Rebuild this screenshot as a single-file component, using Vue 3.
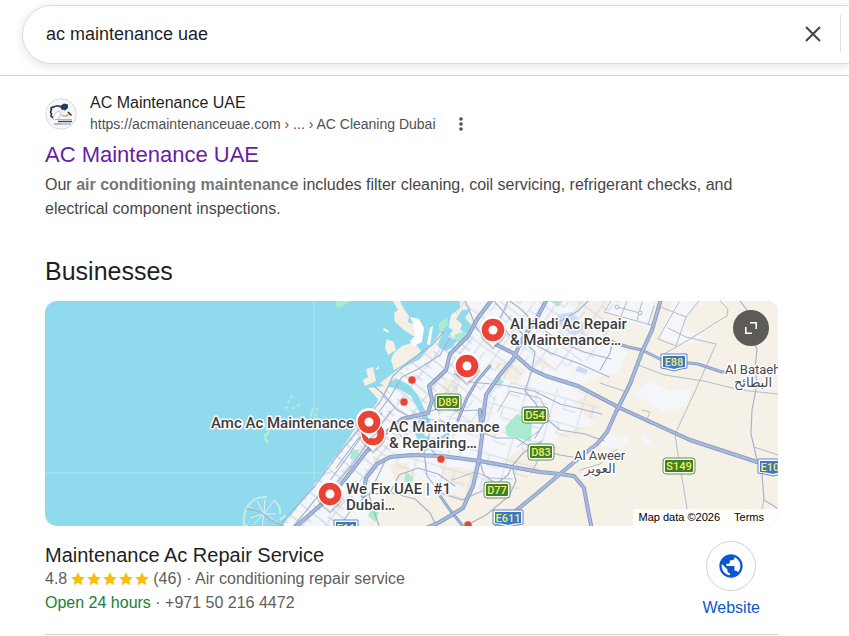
<script setup>
import { ref } from 'vue'

const query = ref('ac maintenance uae')

const pins = [
  { x: 493, y: 330 },
  { x: 467, y: 366 },
  { x: 373, y: 434 },
  { x: 369, y: 422 },
  { x: 330, y: 494 },
]

const dots = [
  { x: 412, y: 380 },
  { x: 404, y: 402 },
  { x: 441, y: 459 },
  { x: 468, y: 525 },
]

const shields = [
  { x: 448, y: 402, w: 24, name: 'D89' },
  { x: 535, y: 415, w: 24, name: 'D54' },
  { x: 541, y: 452, w: 24, name: 'D83' },
  { x: 497, y: 490, w: 24, name: 'D77' },
  { x: 679, y: 466, w: 30, name: 'S149' },
]

const highwayShields = [
  { x: 674, y: 362, w: 24, name: 'E88' },
  { x: 508, y: 518, w: 28, name: 'E611' },
  { x: 346, y: 528, w: 22, name: 'E11' },
  { x: 773, y: 467, w: 28, name: 'E102' },
]

const places = [
  { x: 510, y: 329, lines: ['Al Hadi Ac Repair', '& Maintenance…'] },
  { x: 211, y: 428, lines: ['Amc Ac Maintenance'] },
  { x: 389, y: 432, lines: ['AC Maintenance', '& Repairing…'] },
  { x: 346, y: 494, lines: ['We Fix UAE | #1', 'Dubai…'] },
]

const highways = [
  'M493 343L513 353L531 369L546 376L578 386L620 408L690 440L757 462L780 467',
  'M661 299L652 330L642 352L630 384L616 412L607 432L597 444L580 457L560 474L534 496L492 530',
  'M292 530L330 497L346 478L366 452L382 436L402 419L428 413L432 400L429 386L446 370L450 354L468 336L478 318L491 301',
  'M483 420L486 395L499 376L513 359L523 338L536 320L547 299',
  'M363 496L366 478L377 464L390 457L412 455L442 456L480 461L512 467L540 472L560 474L574 476L584 488L588 510L592 530',
  'M480 410L482 436L479 460L473 486L463 508L440 522L422 530',
]

const arterials = [
  'M458 420L467 398L477 381L490 366',
  'M606 340L628 347L642 350L662 360L698 364L722 372L736 372',
  'M436 490L450 510L466 530',
]

const roads = [
  'M444 332L432 345L408 362L393 376L382 399L363 424L337 456L315 486L286 518L278 528',
  'M450 338L440 355L420 368L402 377L390 397L370 424L348 456L326 486L302 516L290 530',
  'M374 386L384 395L397 410L410 417L434 420',
  'M465 301L470 312L477 329L489 341',
  'M494 301L511 320L528 341L551 353L580 364L609 377',
  'M510 301L522 310L536 325L557 323L578 311L588 301',
  'M536 323L558 341L584 352L611 359',
  'M524 342L535 352L532 370L525 391L536 404L544 423L535 438',
  'M454 374L470 382L502 385L534 391L560 404L602 414',
  'M440 420L455 428L477 431L497 438L516 438L529 446L560 455L578 458',
  'M427 418L430 432L424 452L427 476L440 493L462 500L482 491',
  'M386 459L378 476L369 495L379 526',
  'M394 427L405 441L428 446L437 456',
  'M427 413L443 406L457 411L480 410',
  'M480 462L484 475L496 484L508 475L512 466L523 453L542 441',
  'M512 466L516 481L509 496L486 515L471 523',
  'M548 420L560 430L585 434L604 441',
  'M508 301L500 319L508 334L523 342',
  'M613 340L610 353L600 370',
  'M382 413L373 424L357 440L336 468M391 411L377 430L352 465L335 485',
  'M340 525L352 509L368 494L392 493L415 499L430 513L438 529',
  'M390 493L399 475L418 468L438 474L455 486',
  'M740 301L747 310L746 321L754 340L757 350L755 368L757 384L752 410L751 434L757 460L762 474L764 500L777 508',
]

const tracks = [
  'M642 410L650 412L646 422L675 432',
  'M679 302L658 339L676 346L686 317L658 306M686 317L699 301',
  'M716 344L703 341L686 337L668 328M716 344L705 369L691 400L675 434L677 448L690 526',
  'M638 365L665 375L704 381L740 390L778 394',
  'M720 301L728 309L727 316L715 323L706 329L690 339L664 354',
  'M754 447L778 455M764 500L760 517',
  'M604 312L655 326M611 301L605 311M627 301L621 316M642 302L637 321M654 306L648 325M617 307L640 313',
  'M498 411L510 391L540 398L550 417M452 480L475 472L490 478L512 479',
  'M517 447L540 430M539 459L531 473M600 383L624 391M580 470L600 464L617 449',
]

const stars = [0, 1, 2, 3, 4]
</script>

<template>
  <div class="page">
    <header class="top">
      <form class="search" role="search" @submit.prevent>
        <input v-model="query" class="query" type="text" aria-label="Search" />
        <button class="clear" type="button" aria-label="Clear" @click="query = ''">
          <svg width="18" height="18" viewBox="0 0 18 18" aria-hidden="true">
            <path d="M2 2L16 16M16 2L2 16" stroke="#444746" stroke-width="2.1" />
          </svg>
        </button>
      </form>
    </header>

    <main class="content">
      <article class="result">
        <div class="source">
          <svg class="favicon" viewBox="0 0 32 32" aria-hidden="true">
            <circle cx="16" cy="16" r="15.3" fill="#f6f7f9" stroke="#d5d9df" />
            <path d="M9 8.500L6 10L6.500 12L5.500 14L6.500 16L6 18L8 20" stroke="#253044" stroke-width="1.600" fill="none" />
            <path d="M8 9.500Q12 6.500 16 9L18 12" stroke="#39465f" stroke-width="1.600" fill="none" />
            <path d="M15 8L19 5.500L23 6.500L23 10L20 12.500L17 11Z" fill="#263b63" />
            <path d="M8 22Q9 14 14 13Q17 13 15 18L12 22" fill="#fff" stroke="#aeb8c7" stroke-width=".8" />
            <path d="M16 16.500L20 17.500L24 15.500L23 18.500L18 18.500Z" fill="#dd9752" />
            <path d="M23 14L26.500 17.500" stroke="#252c3b" stroke-width="1.500" />
            <path d="M10 21.500H27" stroke="#9aa4b2" stroke-width=".8" />
            <path d="M13 23.500H27" stroke="#3c465b" stroke-width="1.400" />
            <path d="M9 26H26" stroke="#8a94a3" stroke-width="1" />
            <path d="M9 26H16" stroke="#c6a27c" stroke-width="1" />
          </svg>
          <div class="origin">
            <div class="site">AC Maintenance UAE</div>
            <div class="address">
              <cite>https://acmaintenanceuae.com › ... › AC Cleaning Dubai</cite>
              <button class="more" type="button" aria-label="About this result">
                <svg width="6" height="16" viewBox="0 0 6 16" fill="#4d5156" aria-hidden="true">
                  <circle cx="3" cy="3" r="1.800" /><circle cx="3" cy="8" r="1.800" /><circle cx="3" cy="13" r="1.800" />
                </svg>
              </button>
            </div>
          </div>
        </div>
        <h3 class="title"><a href="#result">AC Maintenance UAE</a></h3>
        <p class="snippet">
          Our <b>air conditioning maintenance</b> includes filter cleaning, coil servicing, refrigerant checks, and
          electrical component inspections.
        </p>
      </article>

      <section class="businesses">
        <h2>Businesses</h2>
        <div class="map">
          <svg class="canvas" viewBox="45 301 733 225" preserveAspectRatio="xMidYMid slice" role="img" aria-label="Map of businesses">
            <defs>
              <clipPath id="urban">
                <path d="M278 530L318 479L363 420L380 398L395 376L433 348L464 301H620L606 339L594 365L600 414L545 458L515 494L457 530Z" />
              </clipPath>
              <pattern id="coastGrid" width="18" height="15" patternUnits="userSpaceOnUse" patternTransform="rotate(38)">
                <path d="M0 2H18M4 2V15M0 10H9" fill="none" stroke="#b9c4db" stroke-width=".8" />
              </pattern>
              <pattern id="cityGrid" width="23" height="19" patternUnits="userSpaceOnUse" patternTransform="rotate(-54)">
                <path d="M0 2H23M4 0V19M14 2V10H23" fill="none" stroke="#c8d0e3" stroke-width=".8" />
              </pattern>
              <pattern id="eastGrid" width="29" height="25" patternUnits="userSpaceOnUse" patternTransform="rotate(16)">
                <path d="M0 2H29M5 2V25M16 2V13H29" fill="none" stroke="#cbd3e4" stroke-width=".8" />
              </pattern>
              <g id="pin">
                <path d="M0 18C-3 13-13 10-13 0A13 13 0 0 1 13 0C13 10 3 13 0 18Z" fill="#6d6d6d" opacity=".3" transform="translate(0 2)" />
                <path d="M0 17C-3 12-13 9-13-1A13 13 0 0 1 13-1C13 9 3 12 0 17Z" fill="#fff" />
                <circle r="11.300" fill="#ea4335" />
                <circle r="4.500" fill="#fff" />
              </g>
            </defs>

            <path d="M45 301H778V526H45Z" fill="#90daee" />
            <path d="M279 530L288 519L300 508L312 492L314 484L321 479L328 466L341 450L354 430L361 417L373 410L378 399L368 388L384 386L391 376L396 371L420 359L432 344L440 333L447 336L451 315L460 308L460 301H778V530Z" fill="#f5f1e6" />
            <g fill="#f4f6f9">
              <path d="M279 530L314 486L363 420L381 399L392 376L434 351L442 338L460 334L473 322L469 301H566L605 337L628 352L617 372L594 379L570 388L601 405L590 425L562 432L550 448L519 460L510 486L490 497L465 488L436 493L420 478L402 484L385 499L366 526Z" />
              <path d="M613 301H654L649 329L604 312Z" />
              <path d="M673 301L695 302L681 328L703 337L689 346L660 338Z" />
              <path d="M650 382L671 391L692 388L686 405L666 413L645 401L633 394Z" />
              <path d="M604 434L630 438L621 449L601 446Z" />
              <path d="M640 434L650 438L653 446L644 444Z" />
            </g>
            <g fill="#f5efe3">
              <path d="M491 360L527 368L516 385L502 376ZM530 362L553 371L545 357ZM544 315L573 321L600 335L570 337ZM573 403L594 390L601 405L590 420ZM388 464L405 462L418 475L398 485ZM439 464L474 470L468 491L444 478ZM475 421L495 422L500 436L484 435ZM500 462L524 448L544 457L536 466ZM446 378L458 384L452 396L440 392Z" />
            </g>
            <g clip-path="url(#urban)">
              <path d="M279 526L364 414L392 376L444 334L474 336L457 391L385 457L344 526Z" fill="url(#coastGrid)" />
              <path d="M450 301H620L606 354L540 375L508 373L485 423L430 440L446 390L470 340Z" fill="url(#cityGrid)" />
              <path d="M396 427L479 409L514 380L604 397L594 430L544 457L516 500L455 500L388 470Z" fill="url(#eastGrid)" />
            </g>
            <g fill="#a9ead1">
              <path d="M505 427L517 414L532 420L531 442L518 438L507 436ZM498 376L504 382L499 386L495 381ZM550 301H563L558 307ZM431 394L439 403L440 415L433 405ZM454 335L465 331L469 338L457 343ZM371 509L379 512L376 522L368 516ZM406 472L414 478L411 484L404 481ZM351 452L359 449L357 460L350 458ZM438 324L447 317L448 325L440 333ZM337 301H350L340 308L335 306Z" />
            </g>
            <g fill="#cddbf5">
              <path d="M557 315L572 312L581 322L597 323L607 332L585 329L574 336L559 325ZM578 366L588 370L586 374L575 371Z" />
            </g>
            <g fill="#90daee">
              <path d="M456 319L462 310L471 309L465 318L471 325L469 334L460 330L462 324ZM439 341L447 326L453 330L448 337L457 340L453 347L446 351L438 347Z" />
              <path d="M390 381L398 379L409 385L418 395L427 415L434 428L430 432L421 415L411 396L399 389L389 387Z" />
              <path d="M411 426L423 417L430 423L424 435L438 444L425 451L414 444L417 437ZM438 438L450 431L449 443L440 446Z" />
            </g>
            <g fill="#f5efe5">
              <path d="M393 301H400L404 309L409 316L408 322L419 327L420 337L413 336L404 330L395 322L394 313L398 310Z" />
              <path d="M387 339L394 342L396 350L388 355L385 347ZM394 353L402 346L414 342L421 351L414 358L401 366L394 370L391 360ZM366 369L373 367L376 381L365 386L363 380L368 377ZM380 383L400 368L398 376L384 386Z" />
              <path d="M410 317L419 319L424 328L422 342L414 346L410 341L415 336L413 323ZM430 328L433 326L430 345L427 344Z" fill="#fff" />
              <path d="M384 328L389 331L388 333L383 330ZM375 370L379 366L379 369Z" fill="#eff8ee" />
            </g>
            <g fill="none" stroke="#b1edd8" stroke-width="2" stroke-dasharray="3 3">
              <path d="M286 409L290 398L295 394M292 409L301 404M312 409L317 407L316 419L309 427L315 433M264 424L269 430L264 436L268 443M299 426L302 417" />
            </g>
            <path d="M265 428L269 431L265 438L268 443M312 410L311 417M317 420L315 428" stroke="#b3eed6" stroke-width="2" fill="none" />
            <g fill="none" stroke="#c5eee1" stroke-width="2">
              <path d="M246 530C239 512 250 496 267 497M273 500Q281 505 280 514M280 520Q285 514 289 518M249 529L246 525" />
              <path d="M264 514L249 507M264 514L257 501M264 514L265 499M264 514L273 502M264 514L250 518M264 514L253 525M264 514L279 523M264 514L262 527M264 514L276 514" stroke="#e0eff1" stroke-width="1" />
              <path d="M246 509Q260 509 271 520L284 526" stroke="#a8b5c8" stroke-width="1.500" />
            </g>
            <path d="M45 473H332M314 301V480" fill="none" stroke="#afe3f0" stroke-width="1" />

            <g fill="none" stroke-linejoin="round" stroke-linecap="round">
              <path v-for="road in tracks" :key="road" :d="road" stroke="#b4bccb" stroke-width="1" />
              <path v-for="road in roads" :key="road" :d="road" stroke="#a6b3d0" stroke-width="1.200" />
              <path v-for="road in arterials" :key="road" :d="road" stroke="#8299c4" stroke-width="3" />
              <path v-for="road in arterials" :key="`${road}-fill`" :d="road" stroke="#a9b9dc" stroke-width="1.500" />
              <path v-for="road in highways" :key="road" :d="road" stroke="#8097c2" stroke-width="4" />
              <path v-for="road in highways" :key="`${road}-fill`" :d="road" stroke="#a9b9dc" stroke-width="2.400" />
            </g>
            <g fill="#f4f6f9" stroke="#afb8c7">
              <circle cx="617" cy="307" r="2" /><circle cx="640" cy="313" r="2" />
            </g>

            <g class="route">
              <g v-for="shield in shields" :key="shield.name" :transform="`translate(${shield.x} ${shield.y})`">
                <rect :x="-shield.w / 2 - 1" y="-8" :width="shield.w + 2" height="16" rx="3" fill="#fff" stroke="#668d4d" />
                <rect :x="-shield.w / 2 + 1" y="-6" :width="shield.w - 2" height="12" rx="1" fill="#3d8127" />
                <text y="4" text-anchor="middle">{{ shield.name }}</text>
              </g>
              <g v-for="shield in highwayShields" :key="shield.name" :transform="`translate(${shield.x} ${shield.y})`">
                <path :d="`M${-shield.w / 2 - 1}-8H${shield.w / 2 + 1}V6Q${shield.w / 4} 7 0 9Q${-shield.w / 4} 7 ${-shield.w / 2 - 1} 6Z`" fill="#fff" stroke="#6385bd" stroke-linejoin="round" />
                <path :d="`M${-shield.w / 2 + 1}-6H${shield.w / 2 - 1}V5Q${shield.w / 4} 5 0 7Q${-shield.w / 4} 5 ${-shield.w / 2 + 1} 5Z`" fill="#3978c4" />
                <text y="4" text-anchor="middle">{{ shield.name }}</text>
              </g>
            </g>

            <g class="town">
              <text x="725" y="374">Al Bataeh</text>
              <text x="753" y="387" text-anchor="middle">البطائح</text>
              <text x="574" y="460">Al Aweer</text>
              <text x="600" y="473" text-anchor="middle">العوير</text>
            </g>
            <circle v-for="dot in dots" :key="dot.x" :cx="dot.x" :cy="dot.y" r="4" fill="#ea4335" stroke="#f7d6d1" stroke-width=".5" />
            <use v-for="pin in pins" :key="pin.y" href="#pin" :x="pin.x" :y="pin.y" />
            <g class="place">
              <text v-for="place in places" :key="place.x">
                <tspan v-for="(line, i) in place.lines" :key="line" :x="place.x" :y="place.y + i * 16">{{ line }}</tspan>
              </text>
            </g>
          </svg>
          <button class="expand" type="button" aria-label="Expand map">
            <svg width="14" height="14" viewBox="0 0 14 14" fill="none" stroke="#fff" stroke-width="1.600" aria-hidden="true">
              <path d="M6 1.800H12.200V8M1.800 6V12.200H8" />
            </svg>
          </button>
          <div class="credit"><span>Map data ©2026</span><a href="#terms">Terms</a></div>
        </div>

        <div class="listing">
          <div class="details">
            <h3>Maintenance Ac Repair Service</h3>
            <div class="rating">
              <span>4.8</span>
              <span class="stars" role="img" aria-label="4.8 out of 5">
                <svg v-for="star in stars" :key="star" width="14" height="14" viewBox="0 0 14 14" aria-hidden="true">
                  <path d="M7 .3L9.100 4.700L13.900 5.200L10.300 8.500L11.300 13.300L7 10.800L2.700 13.300L3.700 8.500L.1 5.200L4.900 4.700Z" fill="#fbbc04" />
                </svg>
              </span>
              <span>(46) · Air conditioning repair service</span>
            </div>
            <div class="hours"><span class="open">Open 24 hours</span> · +971 50 216 4472</div>
          </div>
          <a class="website" href="#website">
            <span class="globe">
              <svg width="28" height="28" viewBox="0 0 24 24" fill="#0b57d0" aria-hidden="true">
                <path d="M12 2C6.480 2 2 6.480 2 12s4.480 10 10 10 10-4.480 10-10S17.520 2 12 2zm-1 17.930c-3.950-.490-7-3.850-7-7.930 0-.620.080-1.210.210-1.790L9 15v1c0 1.100.9 2 2 2v1.930zm6.900-2.540c-.260-.810-1-1.390-1.900-1.390h-1v-3c0-.550-.450-1-1-1H8v-2h2c.550 0 1-.450 1-1V7h2c1.100 0 2-.9 2-2v-.410c2.930 1.190 5 4.060 5 7.410 0 2.080-.8 3.970-2.100 5.390z" />
              </svg>
            </span>
            Website
          </a>
        </div>
      </section>
    </main>
  </div>
</template>

<style>
body {
  margin: 0;
  background: #fff;
  overflow-x: hidden;
}
</style>

<style scoped>
.page {
  font-family: "Liberation Sans", Arial, sans-serif;
  font-size: 16px;
  color: #1f1f1f;
}
.top {
  padding: 5px 0 11px 22px;
  border-bottom: 1px solid #d2d2d6;
  overflow: hidden;
}
.search {
  display: flex;
  align-items: center;
  box-sizing: border-box;
  height: 59px;
  padding: 0 0 2px 23px;
  border: 1px solid #dadce0;
  border-right: 0;
  border-radius: 30px 0 0 30px;
  box-shadow: 0 2px 8px 1px rgba(64, 60, 67, 0.12);
}
.query {
  flex: 1;
  min-width: 0;
  padding: 0;
  border: 0;
  outline: 0;
  background: none;
  font: 18px/24px "Liberation Sans", Arial, sans-serif;
  color: #1f1f1f;
}
button {
  padding: 0;
  border: 0;
  background: none;
  cursor: pointer;
}
.clear {
  display: flex;
  align-items: center;
  height: 37px;
  margin-right: 8px;
  padding-right: 18px;
  border-right: 1px solid #dadce0;
}
.content {
  max-width: 733px;
  padding: 17px 16px 0 45px;
}
.source {
  display: flex;
  align-items: center;
  gap: 13px;
}
.favicon {
  width: 32px;
  height: 32px;
}
.site {
  line-height: 20px;
}
.address {
  display: flex;
  align-items: center;
  gap: 22px;
  font-size: 14px;
  line-height: 22px;
  color: #4d5156;
}
cite {
  font-style: normal;
}
.more {
  display: flex;
}
h2,
h3,
p {
  margin: 0;
  font-weight: 400;
}
.title {
  padding: 4px 0 2px;
  font-size: 22px;
  line-height: 32px;
}
.title a {
  color: #681da8;
  text-decoration: none;
}
.snippet {
  line-height: 24px;
  color: #474747;
}
.snippet b {
  color: #767676;
}
.businesses {
  padding-top: 34px;
}
h2 {
  padding-bottom: 14px;
  font-size: 25px;
  line-height: 32px;
}
.map {
  position: relative;
  height: 225px;
  overflow: hidden;
  border-radius: 12px;
}
.canvas {
  display: block;
  width: 100%;
  height: 100%;
}
.place {
  font: 500 15px Roboto, sans-serif;
  fill: #3c3c3c;
  stroke: #fff;
  stroke-width: 3px;
  stroke-linejoin: round;
  paint-order: stroke;
}
.town {
  font: 400 13px Roboto, "DejaVu Sans", sans-serif;
  fill: #45494f;
  stroke: #fff;
  stroke-width: 3px;
  stroke-linejoin: round;
  paint-order: stroke;
}
.route {
  font: 500 11px Roboto, sans-serif;
  fill: #f4ed66;
}
.expand {
  position: absolute;
  top: 9px;
  right: 9px;
  display: flex;
  align-items: center;
  justify-content: center;
  width: 36px;
  height: 36px;
  border-radius: 50%;
  background: #5c5b58;
}
.credit {
  position: absolute;
  right: 0;
  bottom: 0;
  display: flex;
  gap: 14px;
  padding: 0 14px 0 6px;
  background: rgba(255, 255, 255, 0.85);
  font-size: 11px;
  line-height: 17px;
  color: #000;
}
.credit a {
  color: inherit;
  text-decoration: none;
}
.listing {
  display: flex;
  justify-content: space-between;
  padding: 15px 18px 17px 0;
  border-bottom: 1px solid #d2d2d6;
}
.listing h3 {
  padding-top: 2px;
  font-size: 20px;
  line-height: 24px;
}
.rating,
.hours {
  line-height: 24px;
  color: #5e5e5e;
}
.rating {
  display: flex;
  align-items: center;
  gap: 4px;
}
.stars {
  display: flex;
  gap: 2px;
}
.open {
  color: #188038;
}
.website {
  display: flex;
  flex-direction: column;
  align-items: center;
  gap: 8px;
  line-height: 18px;
  color: #0b57d0;
  text-decoration: none;
}
.globe {
  display: flex;
  align-items: center;
  justify-content: center;
  box-sizing: border-box;
  width: 50px;
  height: 50px;
  border: 1px solid #d2d2d2;
  border-radius: 50%;
}
</style>
